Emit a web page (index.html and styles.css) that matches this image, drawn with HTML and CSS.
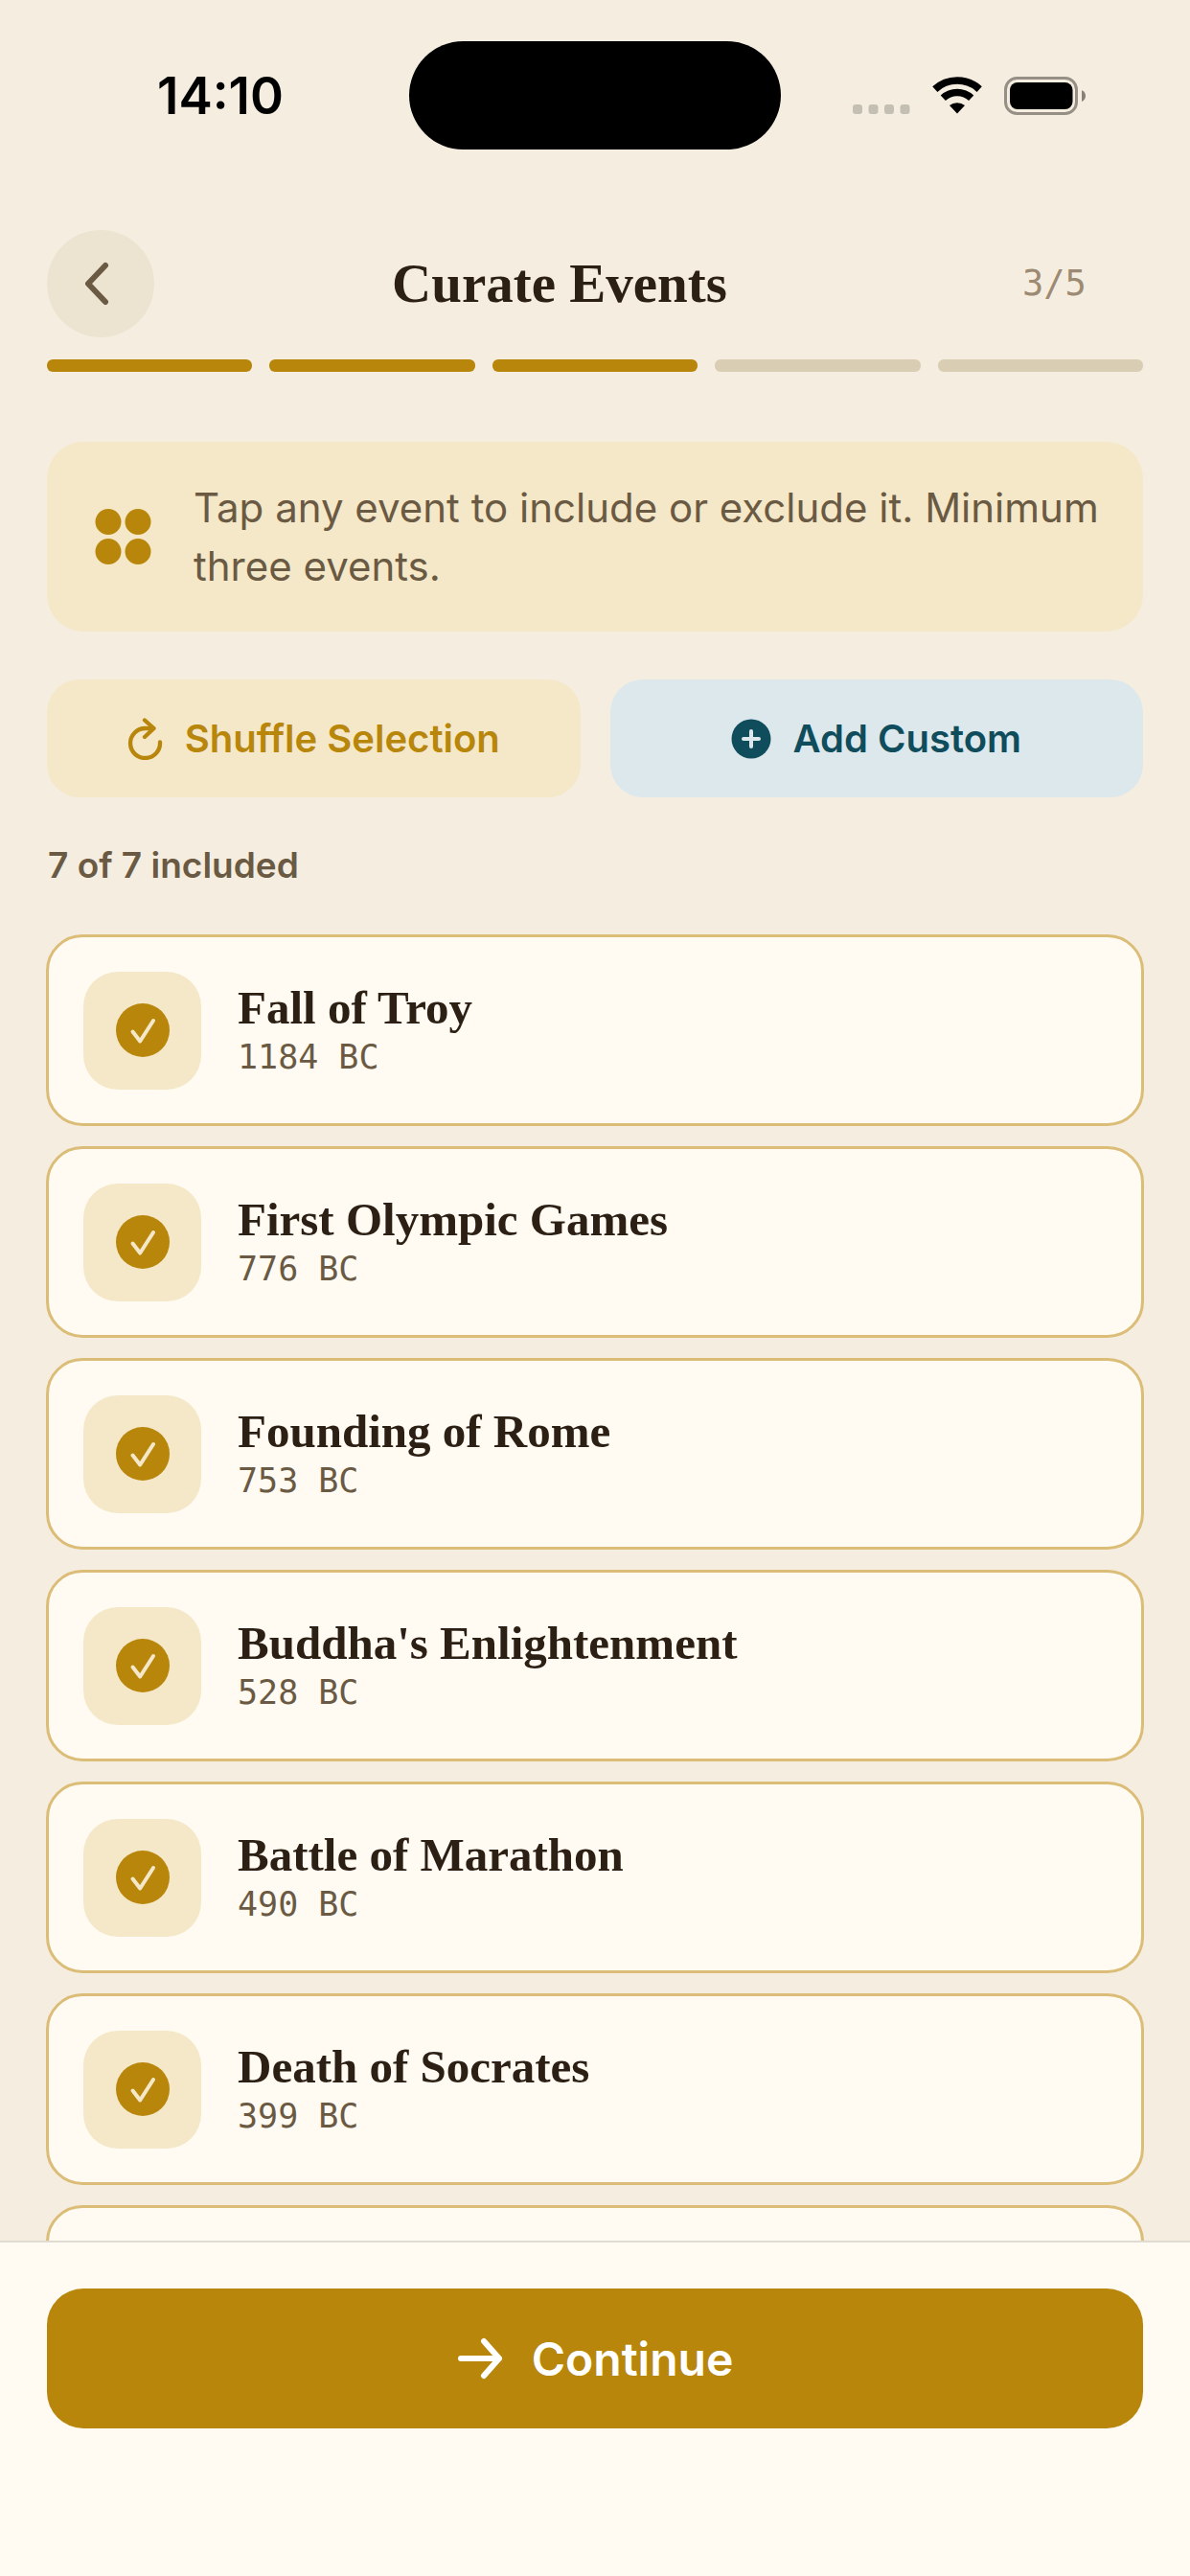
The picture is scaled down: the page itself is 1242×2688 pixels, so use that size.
FILE: index.html
```html
<!DOCTYPE html>
<html lang="en">
<head>
<meta charset="utf-8">
<meta name="viewport" content="width=device-width, initial-scale=1">
<title>Curate Events</title>
<link rel="stylesheet" href="styles.css">
</head>
<body>
<svg class="sprite" aria-hidden="true">
  <symbol id="check" viewBox="0 0 56 56">
    <circle cx="28" cy="28" r="28" fill="#b8860b"/>
    <path d="M17.500 29.500 L25.200 39.500 L39 18" fill="none" stroke="#f5e8c8" stroke-width="4" stroke-linecap="round" stroke-linejoin="round"/>
  </symbol>
</svg>
<div class="screen">
  <div class="status">
    <time class="clock">14:10</time>
    <div class="island"></div>
    <div class="indicators">
      <svg width="60" height="11" viewBox="0 0 60 11" class="signal" fill="#c4bfb3"><rect width="10" height="10" rx="3"/><rect x="16.500" width="10" height="10" rx="3"/><rect x="33" width="10" height="10" rx="3"/><rect x="49.500" width="10" height="10" rx="3"/></svg>
      <svg width="52" height="39" viewBox="0 0 52 39" class="wifi"><path d="M26 38.500 L18 30 A12.700 12.700 0 0 1 34 30 Z"/><g fill="none" stroke="#000" stroke-width="7.600"><path d="M11.300 22.300 A21.500 21.500 0 0 1 40.700 22.300"/><path d="M2.800 13.100 A34 34 0 0 1 49.200 13.100"/></g></svg>
      <svg width="85" height="40" viewBox="0 0 85 40" class="battery"><rect x="1.500" y="1.500" width="74" height="37" rx="12" fill="none" stroke="#958f86" stroke-width="3"/><rect x="6" y="6" width="65.500" height="28" rx="8"/><path d="M81 14 Q85 16 85 20 Q85 24 81 26 Z" fill="#858078"/></svg>
    </div>
  </div>
  <header class="header">
    <button class="back" type="button" aria-label="Back"><svg width="26" height="50" viewBox="0 0 26 50"><path d="M22 6 L4 25 L22 44" fill="none" stroke="#6b5a43" stroke-width="6" stroke-linecap="round" stroke-linejoin="round"/></svg></button>
    <h1 class="title">Curate Events</h1>
    <span class="step">3/5</span>
  </header>
  <div class="progress"><span class="bar done"></span><span class="bar done"></span><span class="bar done"></span><span class="bar"></span><span class="bar"></span></div>
  <main class="content">
    <div class="hint">
      <svg width="60" height="60" viewBox="0 0 60 60" class="hint-icon" fill="#b8860b"><circle cx="15" cy="14.500" r="13.500"/><circle cx="46" cy="14.500" r="13.500"/><circle cx="15" cy="45.500" r="13.500"/><circle cx="46" cy="45.500" r="13.500"/></svg>
      <p class="hint-text">Tap any event to include or exclude it. Minimum three events.</p>
    </div>
    <div class="actions">
      <button class="action shuffle" type="button"><svg width="38" height="44" viewBox="0 0 38 44"><g fill="none" stroke="#b8860b" stroke-width="4.300" stroke-linecap="round" stroke-linejoin="round"><path d="M27 11 H18.500 A15.500 15.500 0 1 0 34 25.500"/><path d="M18 2.500 L27.500 11 L18 20"/></g></svg>Shuffle Selection</button>
      <button class="action custom" type="button"><svg width="42" height="42" viewBox="0 0 42 42"><circle cx="21" cy="21" r="20.500" fill="#0f4c5c"/><path d="M21 13 V29 M13 21 H29" stroke="#dde8ec" stroke-width="4" stroke-linecap="round"/></svg>Add Custom</button>
    </div>
    <p class="count">7 of 7 included</p>
    <div class="events">
      <button class="event" type="button" aria-pressed="true"><span class="tile"><svg width="56" height="56"><use href="#check"/></svg></span><span class="info"><span class="name">Fall of Troy</span><span class="date">1184 BC</span></span></button>
      <button class="event" type="button" aria-pressed="true"><span class="tile"><svg width="56" height="56"><use href="#check"/></svg></span><span class="info"><span class="name">First Olympic Games</span><span class="date">776 BC</span></span></button>
      <button class="event" type="button" aria-pressed="true"><span class="tile"><svg width="56" height="56"><use href="#check"/></svg></span><span class="info"><span class="name">Founding of Rome</span><span class="date">753 BC</span></span></button>
      <button class="event" type="button" aria-pressed="true"><span class="tile"><svg width="56" height="56"><use href="#check"/></svg></span><span class="info"><span class="name">Buddha's Enlightenment</span><span class="date">528 BC</span></span></button>
      <button class="event" type="button" aria-pressed="true"><span class="tile"><svg width="56" height="56"><use href="#check"/></svg></span><span class="info"><span class="name">Battle of Marathon</span><span class="date">490 BC</span></span></button>
      <button class="event" type="button" aria-pressed="true"><span class="tile"><svg width="56" height="56"><use href="#check"/></svg></span><span class="info"><span class="name">Death of Socrates</span><span class="date">399 BC</span></span></button>
      <button class="event" type="button" aria-pressed="true" aria-label="Seventh event"></button>
    </div>
  </main>
  <footer class="footer">
    <button class="continue" type="button"><svg width="48" height="44" viewBox="0 0 48 44"><path d="M4 22 H44 M28 4 L44 22 L28 40" fill="none" stroke="#fff" stroke-width="6" stroke-linecap="round" stroke-linejoin="round"/></svg>Continue</button>
  </footer>
</div>
</body>
</html>
```
FILE: styles.css
```css
* { box-sizing: border-box; }
body { margin: 0; background: #f5eee0; color: #6b5a43; font-family: Inter, "Liberation Sans", sans-serif; }
h1, p { margin: 0; }
button { border: 0; padding: 0; font-family: inherit; cursor: pointer; }
svg { display: block; flex: none; }
.sprite { position: absolute; width: 0; height: 0; }

.screen { height: 100vh; display: flex; flex-direction: column; overflow: hidden; }

.status { flex: none; display: grid; grid-template-columns: 1fr 388px 1fr; align-items: center; padding-top: 43px; }
.clock { padding-left: 164px; color: #000; font-size: 53px; line-height: 60px; font-weight: 600; }
.island { height: 113px; border-radius: 57px; background: #000; }
.indicators { display: flex; align-items: center; justify-content: flex-end; gap: 23px; padding-right: 109px; }
.signal { align-self: flex-end; }

.header { flex: none; display: flex; align-items: center; justify-content: space-between; padding: 84px 49px 0; }
.back { width: 112px; height: 112px; border-radius: 50%; background: #ece4d1; display: flex; align-items: center; justify-content: center; padding-right: 8px; }
.title { color: #2c1f14; font-family: "Liberation Serif", serif; font-size: 57px; line-height: 68px; font-weight: 700; }
.step { width: 186px; padding-left: 60px; color: #9c8a72; font-family: "DejaVu Sans Mono", monospace; font-size: 37px; line-height: 48px; }

.progress { flex: none; display: flex; gap: 18px; padding: 23px 49px 0; }
.bar { flex: 1; height: 13px; border-radius: 6px; background: #d9cdb4; }
.done { background: #b8860b; }

.content { flex: 1; min-height: 0; overflow: hidden; padding: 73px 48px 0; }
.hint { display: flex; align-items: center; gap: 44px; padding: 38px 36px 38px 49px; border-radius: 38px; background: #f5e8c8; margin: 0 1px; }
.hint-text { font-size: 42px; line-height: 61px; }
.actions { display: flex; gap: 31px; margin: 50px 1px 0; }
.action { flex: 1; display: flex; align-items: center; justify-content: center; gap: 22px; height: 123px; border-radius: 34px; font-size: 40px; font-weight: 600; }
.shuffle { background: #f5e8c8; color: #b8860b; }
.custom { background: #dde8ec; color: #0f4c5c; }
.count { margin: 47px 2px 0; font-size: 37px; line-height: 48px; font-weight: 600; }
.events { display: flex; flex-direction: column; gap: 21px; margin-top: 48px; }
.event { flex: none; display: flex; align-items: center; gap: 38px; height: 200px; padding: 0 36px; border: 3px solid #dbbd78; border-radius: 38px; background: #fffbf2; text-align: left; }
.tile { display: flex; align-items: center; justify-content: center; width: 123px; height: 123px; border-radius: 36px; background: #f5e8c8; }
.info { display: flex; flex-direction: column; }
.name { color: #2c1f14; font-family: "Liberation Serif", serif; font-size: 49px; line-height: 56px; font-weight: 700; }
.date { color: #6b5a43; font-family: "DejaVu Sans Mono", monospace; font-size: 35px; line-height: 46px; }

.footer { flex: none; padding: 48px 49px 154px; border-top: 2px solid #e0dcd2; background: #fffbf2; }
.continue { display: flex; align-items: center; justify-content: center; gap: 30px; width: 100%; height: 146px; border-radius: 38px; background: #b8860b; color: #fff; font-size: 48px; font-weight: 600; }
```
